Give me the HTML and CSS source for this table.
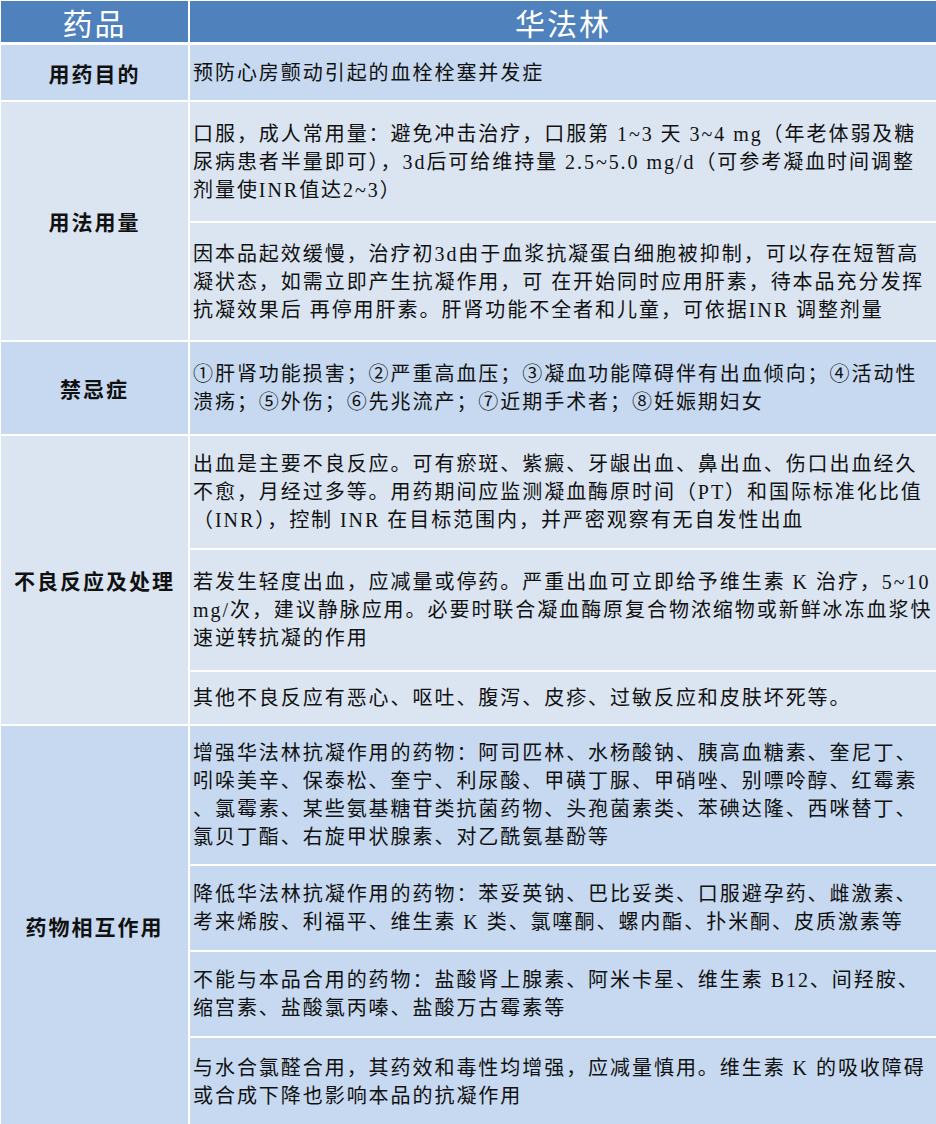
FILE: index.html
```html
<!DOCTYPE html>
<html lang="zh-CN">
<head>
<meta charset="utf-8">
<title>华法林</title>
<link rel="stylesheet" href="styles.css">
</head>
<body>
<div class="sheet">
  <div class="head">药品</div>
  <div class="head">华法林</div>

  <div class="label dark">用药目的</div>
  <div class="cell dark">预防心房颤动引起的血栓栓塞并发症</div>

  <div class="label light span2">用法用量</div>
  <div class="cell light">口服，成人常用量：避免冲击治疗，口服第 1~3 天 3~4 mg（年老体弱及糖<br>尿病患者半量即可），3d后可给维持量 2.5~5.0 mg/d（可参考凝血时间调整<br>剂量使INR值达2~3）</div>
  <div class="cell light">因本品起效缓慢，治疗初3d由于血浆抗凝蛋白细胞被抑制，可以存在短暂高<br>凝状态，如需立即产生抗凝作用，可 在开始同时应用肝素，待本品充分发挥<br>抗凝效果后 再停用肝素。肝肾功能不全者和儿童，可依据INR 调整剂量</div>

  <div class="label dark">禁忌症</div>
  <div class="cell dark">①肝肾功能损害；②严重高血压；③凝血功能障碍伴有出血倾向；④活动性<br>溃疡；⑤外伤；⑥先兆流产；⑦近期手术者；⑧妊娠期妇女</div>

  <div class="label light span3">不良反应及处理</div>
  <div class="cell light">出血是主要不良反应。可有瘀斑、紫癜、牙龈出血、鼻出血、伤口出血经久<br>不愈，月经过多等。用药期间应监测凝血酶原时间（PT）和国际标准化比值<br>（INR），控制 INR 在目标范围内，并严密观察有无自发性出血</div>
  <div class="cell light">若发生轻度出血，应减量或停药。严重出血可立即给予维生素 K 治疗，5~10<br>mg/次，建议静脉应用。必要时联合凝血酶原复合物浓缩物或新鲜冰冻血浆快<br>速逆转抗凝的作用</div>
  <div class="cell light">其他不良反应有恶心、呕吐、腹泻、皮疹、过敏反应和皮肤坏死等。</div>

  <div class="label dark span4">药物相互作用</div>
  <div class="cell dark">增强华法林抗凝作用的药物：阿司匹林、水杨酸钠、胰高血糖素、奎尼丁、<br>吲哚美辛、保泰松、奎宁、利尿酸、甲磺丁脲、甲硝唑、别嘌呤醇、红霉素<br>、氯霉素、某些氨基糖苷类抗菌药物、头孢菌素类、苯碘达隆、西咪替丁、<br>氯贝丁酯、右旋甲状腺素、对乙酰氨基酚等</div>
  <div class="cell dark">降低华法林抗凝作用的药物：苯妥英钠、巴比妥类、口服避孕药、雌激素、<br>考来烯胺、利福平、维生素 K 类、氯噻酮、螺内酯、扑米酮、皮质激素等</div>
  <div class="cell dark">不能与本品合用的药物：盐酸肾上腺素、阿米卡星、维生素 B12、间羟胺、<br>缩宫素、盐酸氯丙嗪、盐酸万古霉素等</div>
  <div class="cell dark">与水合氯醛合用，其药效和毒性均增强，应减量慎用。维生素 K 的吸收障碍<br>或合成下降也影响本品的抗凝作用</div>
</div>
</body>
</html>
```

FILE: styles.css
```css
html, body {
  margin: 0;
  padding: 0;
  background: #ffffff;
}

body {
  font-family: "Liberation Serif", "Noto Sans CJK SC", serif;
  color: #111111;
}

.sheet {
  display: grid;
  grid-template-columns: 187px 1fr;
  grid-template-rows: 42px 55px 119px 117px 92px 112px 120px 52px 138px 84px 84px 88px;
  gap: 2px;
  padding: 1px 0 0 1px;
  width: 935px;
  background: #ffffff;
}

.head {
  background: #4f81bd;
  color: #ffffff;
  font-family: "Noto Sans CJK SC", sans-serif;
  font-size: 30px;
  font-weight: 400;
  letter-spacing: 2px;
  display: flex;
  align-items: center;
  justify-content: center;
  margin-bottom: 1px;
}

.dark {
  background: #c6d9f0;
}

.light {
  background: #dbe5f1;
}

.label {
  display: flex;
  align-items: center;
  justify-content: center;
  font-family: "Noto Sans CJK SC", sans-serif;
  font-size: 21px;
  font-weight: 700;
  letter-spacing: 2px;
  color: #111111;
}

.span2 { grid-row: span 2; }
.span3 { grid-row: span 3; }
.span4 { grid-row: span 4; }

.cell {
  display: flex;
  align-items: center;
  padding: 0 2px 0 3px;
  font-size: 20px;
  line-height: 28px;
  letter-spacing: 1.95px;
  white-space: nowrap;
  overflow: hidden;
}
```
